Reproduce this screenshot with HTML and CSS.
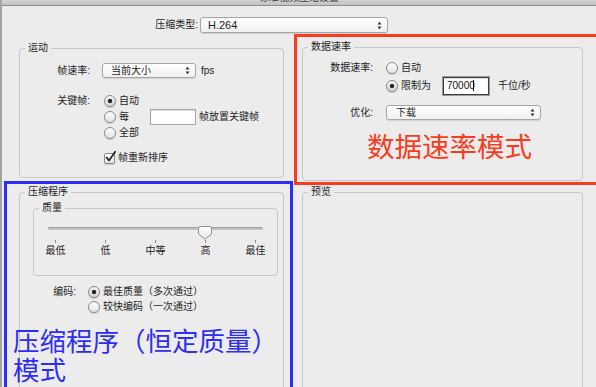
FILE: index.html
```html
<!DOCTYPE html>
<html lang="zh-CN">
<head>
<meta charset="utf-8">
<title>标准视频压缩设置</title>
<link rel="stylesheet" href="styles.css">
</head>
<body>
<div class="window">
  <div class="titlebar"><span class="title">标准视频压缩设置</span></div>
  <div class="content">
    <div class="type-row">
      <span class="type-label">压缩类型:</span>
      <div class="select select-type">
        <span>H.264</span>
        <svg class="arrows" width="5" height="9" viewBox="0 0 5 9"><path d="M0.5 3.6 L2.5 0.8 L4.5 3.6 Z M0.5 5.4 L2.5 8.2 L4.5 5.4 Z"/></svg>
      </div>
    </div>

    <div class="columns">
      <section class="group motion">
        <div class="legend">运动</div>
        <div class="row row-fps">
          <span class="lab lab-15">帧速率:</span>
          <div class="select select-fps">
            <span>当前大小</span>
            <svg class="arrows" width="5" height="9" viewBox="0 0 5 9"><path d="M0.5 3.6 L2.5 0.8 L4.5 3.6 Z M0.5 5.4 L2.5 8.2 L4.5 5.4 Z"/></svg>
          </div>
          <span class="unit">fps</span>
        </div>
        <div class="row row-key">
          <span class="lab">关键帧:</span>
          <div class="opts keyframes">
            <div class="opt"><span class="radio on"></span><span>自动</span></div>
            <div class="opt opt-every"><span class="radio"></span><span>每</span><span class="field field-every"></span><span class="after-field">帧放置关键帧</span></div>
            <div class="opt"><span class="radio"></span><span>全部</span></div>
          </div>
        </div>
        <div class="row row-reorder">
          <span class="lab"></span>
          <div class="opt keyframes-check">
            <span class="check"><svg width="13" height="13" viewBox="0 0 13 13"><path d="M2.6 6.4 L5 9.6 L11.2 0.8" fill="none" stroke="#222" stroke-width="1.7" stroke-linecap="round" stroke-linejoin="round"/></svg></span>
            <span>帧重新排序</span>
          </div>
        </div>
      </section>

      <section class="group rate">
        <div class="legend">数据速率</div>
        <div class="row row-rate">
          <span class="lab">数据速率:</span>
          <div class="opts">
            <div class="opt"><span class="radio"></span><span>自动</span></div>
            <div class="opt opt-limit"><span class="radio on"></span><span>限制为</span><span class="field field-rate">70000<span class="caret"></span></span><span class="after-rate">千位/秒</span></div>
          </div>
        </div>
        <div class="row row-opt">
          <span class="lab lab-15">优化:</span>
          <div class="select select-opt">
            <span>下载</span>
            <svg class="arrows" width="5" height="9" viewBox="0 0 5 9"><path d="M0.5 3.6 L2.5 0.8 L4.5 3.6 Z M0.5 5.4 L2.5 8.2 L4.5 5.4 Z"/></svg>
          </div>
        </div>
      </section>

      <section class="group compressor">
        <div class="legend">压缩程序</div>
        <section class="group quality">
          <div class="legend">质量</div>
          <div class="slider">
            <div class="track-wrap">
              <div class="track"></div>
              <svg class="thumb" width="14" height="14" viewBox="0 0 14 14">
                <defs><linearGradient id="tg" x1="0" y1="0" x2="0" y2="1"><stop offset="0" stop-color="#ffffff"/><stop offset="1" stop-color="#e4e4e4"/></linearGradient></defs>
                <path d="M2.5 0.5 H11.5 Q13.5 0.5 13.5 2.5 V8 L7 13.2 L0.5 8 V2.5 Q0.5 0.5 2.5 0.5 Z" fill="url(#tg)" stroke="#8e8e8e"/>
              </svg>
            </div>
            <div class="ticks">
              <div class="tick"><span class="mark"></span><span class="tl">最低</span></div>
              <div class="tick"><span class="mark"></span><span class="tl">低</span></div>
              <div class="tick"><span class="mark"></span><span class="tl">中等</span></div>
              <div class="tick"><span class="mark"></span><span class="tl">高</span></div>
              <div class="tick"><span class="mark"></span><span class="tl">最佳</span></div>
            </div>
          </div>
        </section>
        <div class="row row-enc">
          <span class="lab lab-enc">编码:</span>
          <div class="opts">
            <div class="opt"><span class="radio on"></span><span>最佳质量（多次通过）</span></div>
            <div class="opt"><span class="radio"></span><span>较快编码（一次通过）</span></div>
          </div>
        </div>
      </section>

      <section class="group preview">
        <div class="legend">预览</div>
      </section>
    </div>
  </div>

  <div class="note note-red"><span class="note-text">数据速率模式</span></div>
  <div class="note note-blue"><span class="note-text">压缩程序（恒定质量）<br>模式</span></div>
</div>
</body>
</html>
```

FILE: styles.css
```css
* { box-sizing: border-box; }

html, body {
  margin: 0;
  padding: 0;
}

body {
  width: 596px;
  height: 387px;
  overflow: hidden;
  background: #ececec;
  font-family: "Liberation Sans", "Noto Sans CJK SC", sans-serif;
  font-size: 10px;
  line-height: 12px;
  color: #1e1e1e;
}

.window {
  position: relative;
  width: 596px;
  height: 387px;
  overflow: hidden;
  border-left: 2px solid #a4a4a4;
}

.titlebar {
  height: 6px;
  background: linear-gradient(#d2d2d2, #c2c2c2);
  border-bottom: 1px solid #8f8f8f;
  overflow: hidden;
}

.title {
  display: block;
  margin-top: -8px;
  text-align: center;
  line-height: 12px;
  color: #3c3c3c;
}

.content {
  padding: 11px 0 0 17px;
}

.type-row {
  display: grid;
  grid-template-columns: 179px 188px;
  column-gap: 2px;
  align-items: center;
  height: 16px;
}

.type-label {
  text-align: right;
}

.select {
  display: flex;
  align-items: center;
  justify-content: space-between;
  height: 15px;
  padding: 0 5px 0 8px;
  border: 1px solid #a6a6a6;
  border-radius: 3px;
  background: linear-gradient(#ffffff, #f0f0f0);
  box-shadow: 0 1px 1px rgba(0, 0, 0, 0.12);
  line-height: 12px;
}

.select-type {
  height: 16px;
  font-size: 11px;
  padding-left: 7px;
}

.select-fps { width: 94px; }
.select-opt { width: 155px; padding-left: 9px; }

.arrows { fill: #333; flex: none; }

.columns {
  display: grid;
  grid-template-columns: 265px 281px;
  column-gap: 18px;
  row-gap: 11px;
  margin-top: 14px;
  align-items: start;
}

.group {
  border: 1px solid #c7c7c7;
  border-radius: 4px;
}

.legend {
  display: block;
  width: max-content;
  margin: -7px 0 0 5px;
  padding: 0 3px;
  background: #ececec;
  line-height: 12px;
}

/* 运动 */
.motion {
  margin-top: 1px;
  padding: 0 0 12px 0;
}

.motion .legend { margin-bottom: 9px; }

.row {
  display: flex;
  align-items: flex-start;
}

.lab {
  flex: none;
  width: 70px;
  margin-right: 12px;
  text-align: right;
  line-height: 14px;
}

.lab-15 { line-height: 15px; }

.unit {
  margin-left: 5px;
  line-height: 15px;
}

.row-key { margin-top: 16px; }
.row-reorder { margin-top: 11px; }

.opts {
  display: flex;
  flex-direction: column;
  gap: 1px;
}

.opt {
  display: flex;
  align-items: center;
  height: 14px;
  white-space: nowrap;
}

.keyframes .opt,
.keyframes-check { padding-left: 2px; }

.radio {
  flex: none;
  width: 12px;
  height: 12px;
  margin-right: 3px;
  border: 1px solid #8a8a8a;
  border-radius: 50%;
  background: linear-gradient(#ffffff, #e2e2e2);
  box-shadow: 0 1px 1px rgba(0, 0, 0, 0.18);
}

.radio.on {
  background: radial-gradient(circle, #262626 0, #262626 1.8px, rgba(38, 38, 38, 0) 2.6px),
              linear-gradient(#f4f4f4, #d6d6d6);
}

.check {
  position: relative;
  flex: none;
  width: 11px;
  height: 11px;
  margin-right: 3px;
  border: 1px solid #8a8a8a;
  border-radius: 2px;
  background: linear-gradient(#ffffff, #e2e2e2);
  box-shadow: 0 1px 1px rgba(0, 0, 0, 0.18);
}

.check svg {
  position: absolute;
  left: -1px;
  top: -3px;
}

.field {
  display: block;
  flex: none;
  width: 46px;
  background: #ffffff;
  border: 1px solid #a3a3a3;
  box-shadow: inset 0 1px 1px rgba(0, 0, 0, 0.15);
}

.opt-every { height: 16px; }

.field-every {
  height: 16px;
  margin-left: 21px;
}

.after-field { margin-left: 3px; }

/* 数据速率 */
.rate {
  padding: 0 0 60px 0;
}

.rate .legend { margin-bottom: 8px; }

.rate .lab { margin-right: 13px; }

.opt-limit {
  height: 18px;
  margin-top: 1px;
}

.field-rate {
  height: 18px;
  margin-left: 12px;
  padding: 2px 0 0 3px;
  border: 1px solid #3e3e3e;
  box-shadow: 0 0 0 1px #9a9a9a, inset 0 1px 1px rgba(0, 0, 0, 0.15);
  font-size: 10px;
  line-height: 12px;
  color: #111;
}

.caret {
  display: inline-block;
  width: 1px;
  height: 11px;
  margin-left: -2px;
  vertical-align: -2px;
  background: #111;
}

.after-rate { margin-left: 9px; }

.row-opt { margin-top: 10px; }

/* 压缩程序 */
.compressor {
  height: 210px;
  padding: 0 5px 0 13px;
}

.compressor > .legend { margin-left: -8px; }

.quality {
  margin-top: 10px;
  padding-bottom: 18px;
}

.slider {
  margin: 13px 14px 0 14px;
}

.track-wrap {
  position: relative;
  height: 13px;
}

.track {
  margin-top: 3px;
  height: 3px;
  border-radius: 2px;
  background: #c4c4c4;
  box-shadow: inset 0 1px 1px rgba(0, 0, 0, 0.2);
}

.thumb {
  position: absolute;
  left: 150px;
  top: -1px;
}

.ticks {
  display: flex;
  justify-content: space-between;
  padding: 0 7px;
}

.tick {
  display: flex;
  flex-direction: column;
  align-items: center;
  width: 1px;
}

.mark {
  display: block;
  width: 1px;
  height: 3px;
  background: #8c8c8c;
}

.tl {
  margin-top: 2px;
  white-space: nowrap;
  line-height: 12px;
}

.row-enc { margin-top: 9px; }

.lab-enc {
  width: 43px;
  margin-right: 12px;
}

/* 预览 */
.preview {
  height: 210px;
}

/* annotations */
.note {
  position: absolute;
}

.note-red {
  left: 292px;
  top: 34px;
  width: 340px;
  height: 151px;
  border: 3px solid #fa3c1e;
  border-right-width: 0;
  padding: 94px 0 0 70px;
}

.note-blue {
  left: 2px;
  top: 181px;
  width: 289px;
  height: 230px;
  border: 3px solid #2e2ef2;
  padding: 141px 0 0 6px;
}

.note-text {
  display: block;
  font-family: "Noto Sans CJK SC", sans-serif;
  white-space: nowrap;
}

.note-red .note-text {
  font-size: 27.5px;
  line-height: 28px;
  color: #fa3c1e;
}

.note-blue .note-text {
  font-size: 26.5px;
  line-height: 29px;
  color: #2e2ef2;
}
```
